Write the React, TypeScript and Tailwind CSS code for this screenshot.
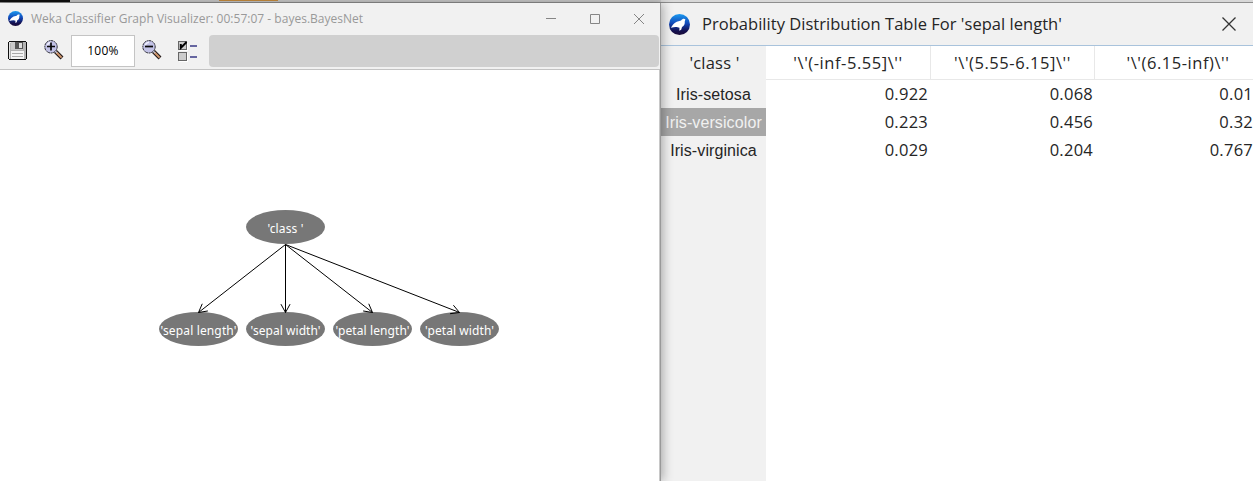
import React from "react";

const sans = "font-['Open_Sans','Noto_Sans',sans-serif]";

function WekaIcon({ size, id }: { size: number; id: string }) {
  return (
    <svg width={size} height={size} viewBox="0 0 20 20" className="shrink-0">
      <defs>
        <linearGradient id={id} x1="0" y1="0" x2="0" y2="1">
          <stop offset="0" stopColor="#1b9af0" />
          <stop offset="0.45" stopColor="#1248b8" />
          <stop offset="0.8" stopColor="#141050" />
          <stop offset="1" stopColor="#1c0c38" />
        </linearGradient>
      </defs>
      <circle cx="10" cy="10" r="10" fill={`url(#${id})`} />
      <path d="M1.8 13.2C3 11 4.4 9 7.4 7.4L11.5 6.2C12.5 4.6 14.4 4 15.6 5L15 7.2C15.3 9.4 14.4 11.4 12.4 12.4L11.6 15L9.8 16L10 13L7.4 12.4C5.4 12.4 3.4 13 1.8 13.2Z" fill="#fff" />
    </svg>
  );
}

function SaveIcon() {
  return (
    <svg width="19" height="19" viewBox="0 0 19 19" shapeRendering="crispEdges">
      <path d="M1 0H18V1H19V18H18V19H1V18H0V1H1Z" fill="#111" />
      <rect x="1" y="1" width="17" height="17" fill="#b4b4b4" />
      <rect x="3" y="1" width="12" height="8" fill="#c9c9c9" />
      <rect x="7" y="1" width="8" height="7" fill="#555" />
      <rect x="11" y="2" width="3" height="5" fill="#ddd" />
      <rect x="3" y="10" width="13" height="8" fill="#f4f4f4" />
      <path d="M4 12.5H15M4 15.5H15" stroke="#aaa" />
      <path d="M1 1.5H3M1.5 1V18" stroke="#e6e6e6" />
    </svg>
  );
}

function ZoomIcon({ plus }: { plus?: boolean }) {
  return (
    <svg width="20" height="20" viewBox="0 0 20 20">
      <path d="M11.5 11.5L18 18" stroke="#201818" strokeWidth="4" />
      <path d="M12.3 12.3L17.6 17.6" stroke="#d39a70" strokeWidth="2" />
      <path d="M11 11L13 13" stroke="#c4c4d4" strokeWidth="1.5" />
      <circle cx="7" cy="6.8" r="6.2" fill="#c2c2e6" stroke="#26262e" strokeDasharray="2 .6" />
      <path d="M3.2 5.5A4.5 4.5 0 0 1 7 2.2" stroke="#f0f0ff" strokeWidth="1.4" fill="none" />
      <path d={plus ? "M3 6.5H11M7 2.5V10.5" : "M3 6.5H11"} stroke="#080808" strokeWidth="1.7" />
    </svg>
  );
}

function OptionsIcon() {
  return (
    <svg width="20" height="21" viewBox="0 0 20 21">
      <g shapeRendering="crispEdges">
        <rect x=".5" y=".5" width="8" height="8" fill="#ccc" stroke="#666" />
        <rect x=".5" y="11.5" width="8" height="8" fill="#ccc" stroke="#666" />
        <path d="M9.5 1V9.5H1M9.5 12V20.5H1" stroke="#fff" fill="none" />
        <path d="M12 5H19M12 16H19" stroke="#6666a0" strokeWidth="2" />
      </g>
      <path d="M2.8 3V7L8.6 1" fill="none" stroke="#000" strokeWidth="1.9" />
    </svg>
  );
}

const nodes = [
  { x: 285.5, y: 227, label: "'class '", w: 36 },
  { x: 198.5, y: 329, label: "'sepal length'", w: 76 },
  { x: 285.5, y: 329, label: "'sepal width'", w: 70 },
  { x: 372.5, y: 329, label: "'petal length'", w: 74 },
  { x: 459.5, y: 329, label: "'petal width'", w: 69 },
];

function arrow(x: number) {
  const a = Math.atan2(68, x - 285.5);
  const p = (d: number) => `${x - 9.5 * Math.cos(a + d)} ${312.5 - 9.5 * Math.sin(a + d)}`;
  return `M285.5 244.5L${x} 312.5M${p(0.5)}L${x} 312.5L${p(-0.5)}`;
}

function Graph() {
  return (
    <svg width="659" height="411" viewBox="0 70 659 411" className="block">
      {nodes.map((n) => (
        <g key={n.label}>
          <ellipse cx={n.x} cy={n.y} rx="39.5" ry="17" fill="#777" />
          <text x={n.x - n.w / 2} y={n.y + 6} textLength={n.w} fill="#fff" className="font-['Noto_Sans',sans-serif] text-[12px]">
            {n.label}
          </text>
        </g>
      ))}
      {nodes.slice(1).map((n) => (
        <path key={n.x} d={arrow(n.x)} stroke="#000" fill="none" />
      ))}
    </svg>
  );
}

function GraphWindow() {
  return (
    <section className="z-10 flex h-[478px] w-[661px] shrink-0 flex-col border-r border-[#999] bg-[#f1f1f1] shadow-[2px_0_10px_rgba(0,0,0,0.3)]">
      <header className="flex h-[31px] items-center pl-2">
        <WekaIcon size={15} id="weka-small" />
        <h1 className={`${sans} ml-[8px] w-[480px] whitespace-nowrap text-[12px] leading-4 tracking-[0.015px] text-[#999]`}>
          Weka Classifier Graph Visualizer: 00:57:07 - bayes.BayesNet
        </h1>
        <svg width="100" height="12" viewBox="0 0 100 12" className="ml-[35px]" fill="none" stroke="#858585">
          <path d="M0 5.5H10M44.5 1.5H53.5V10.5H44.5ZM88 1L98 11M98 1L88 11" />
        </svg>
      </header>
      <div className="flex h-[36px] items-start border-b border-[#c3c3c3]">
        <div className="ml-2 mt-[7px]"><SaveIcon /></div>
        <div className="ml-[17px] mt-[6px]"><ZoomIcon plus /></div>
        <div className={`${sans} ml-[7px] mt-[1px] flex h-8 w-16 items-center justify-center border border-[#c4c4c4] bg-white text-[12px] tracking-[0.3px] text-black`}>
          100%
        </div>
        <div className="ml-[7px] mt-[6px]"><ZoomIcon /></div>
        <div className="ml-4 mt-[7px]"><OptionsIcon /></div>
        <div className="ml-[11px] mt-[1px] h-8 w-[450px] rounded-sm bg-[#d0d0d0]" />
      </div>
      <div className="w-[660px] flex-1 overflow-hidden border-r border-[#c8c8c8] bg-white"><Graph /></div>
    </section>
  );
}

const rows = [
  { name: "Iris-setosa", values: ["0.922", "0.068", "0.01"] },
  { name: "Iris-versicolor", values: ["0.223", "0.456", "0.32"], selected: true },
  { name: "Iris-virginica", values: ["0.029", "0.204", "0.767"] },
];

function TableWindow() {
  return (
    <section className="flex h-[478px] w-[592px] flex-col bg-white">
      <header className="flex h-[43px] items-center border-b border-[#a9c3dc] bg-[#f1f1f1] pl-2">
        <WekaIcon size={21} id="weka-large" />
        <h2 className={`${sans} ml-3 w-[480px] whitespace-nowrap text-[16.5px] leading-5 tracking-[0.03px] text-[#252525]`}>
          Probability Distribution Table For 'sepal length'
        </h2>
        <svg width="16" height="16" viewBox="0 0 16 16" className="ml-[39px]" stroke="#333" strokeWidth="1.3">
          <path d="M1.5 1.5L14.5 14.5M14.5 1.5L1.5 14.5" />
        </svg>
      </header>
      <div className={`${sans} flex flex-1 text-[16.5px] text-[#252525]`}>
        <div className="flex w-[105px] shrink-0 flex-col bg-[#f1f1f1] text-center">
          <div className="h-[34px] pl-[2px] leading-[33px] tracking-[0.2px]">'class '</div>
          {rows.map((r) => (
            <div
              key={r.name}
              className={`h-[28px] whitespace-nowrap font-['Liberation_Sans',Arial,sans-serif] text-[16px] leading-[29px] tracking-[0.1px] ${r.selected ? "bg-[#a7a7a7] text-[#f1f1f1]" : ""}`}
            >
              {r.name}
            </div>
          ))}
        </div>
        <div className="grid w-[487px] grid-cols-[165px_164px_158px] content-start">
          {["'\\'(-inf-5.55]\\''", "'\\'(5.55-6.15]\\''", "'\\'(6.15-inf)\\''"].map((h, i) => (
            <div key={h} className={`h-[34px] border-b border-[#e8e8e8] text-center leading-[34px] tracking-[0.55px] ${i < 2 ? "border-r" : "pl-[8px]"}`}>
              {h}
            </div>
          ))}
          {rows.map((r) =>
            r.values.map((v, i) => (
              <div key={r.name + i} className={`h-[28px] text-right leading-[28px] tracking-[0.25px] ${i === 0 ? "pr-[3px]" : i === 1 ? "pr-[2px]" : "pr-0"}`}>
                {v}
              </div>
            )),
          )}
        </div>
      </div>
    </section>
  );
}

export default function App() {
  return (
    <main className="flex h-[481px] w-[1253px] flex-col overflow-hidden bg-white">
      <div className="flex h-[3px] shrink-0 border-b border-[#8e8e8e] bg-[#c8c8c8]">
        <div className="w-[70px] bg-[#111]" />
        <div className="ml-[149px] h-[1px] w-[59px] bg-[#c78c3c]" />
        <div className="ml-auto w-[592px] bg-[#d8d8d8]" />
      </div>
      <div className="flex">
        <GraphWindow />
        <TableWindow />
      </div>
    </main>
  );
}
